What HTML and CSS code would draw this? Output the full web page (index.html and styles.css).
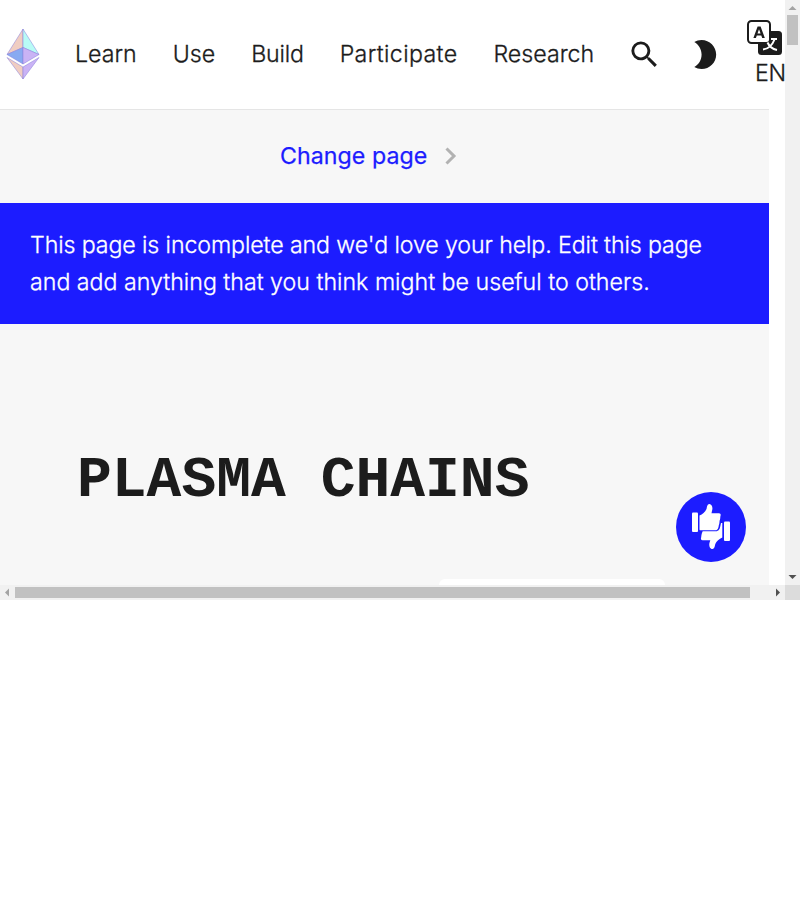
FILE: index.html
```
<!DOCTYPE html>
<html lang="en">
<head>
<meta charset="utf-8">
<title>Plasma chains</title>
<link rel="stylesheet" href="styles.css">
</head>
<body>
<div class="window">
  <div class="viewport">
    <div class="page">
      <header class="nav">
        <svg class="logo" width="34" height="52" viewBox="0 0 34 52">
          <g stroke="#8a80dc" stroke-opacity=".65" stroke-width=".8" stroke-linejoin="round">
            <path fill="#f0cdc2" d="M17 1 1 26.5l16-7z"/>
            <path fill="#b8fbf6" d="M17 1l16 25.500-16-7z"/>
            <path fill="#88aaf1" d="M1 26.500l16-7v16.500z"/>
            <path fill="#c9b3f5" d="M33 26.500l-16-7v16.500z"/>
            <path fill="#f0cdc2" d="M1 29.500l16 9.500v12z"/>
            <path fill="#cab3f5" d="M33 29.500l-16 9.500v12z"/>
          </g>
        </svg>
        <nav class="links"><a>Learn</a><a>Use</a><a class="tight">Build</a><a class="loose">Participate</a><a>Research</a></nav>
        <svg class="search" width="35" height="35" viewBox="0 0 24 24"><path fill="#1c1c1c" d="M15.500 14h-.79l-.28-.27A6.471 6.471 0 0 0 16 9.500 6.500 6.500 0 1 0 9.500 16c1.610 0 3.090-.59 4.230-1.570l.27.28v.79l5 4.990L20.490 19l-4.990-5zm-6 0C7.010 14 5 11.990 5 9.500S7.010 5 9.500 5 14 7.010 14 9.500 11.990 14 9.500 14z"/></svg>
        <svg class="moon" width="35" height="35" viewBox="0 0 24 24"><path fill="#1c1c1c" d="M10 2c-1.820 0-3.530.5-5 1.350C7.990 5.080 10 8.300 10 12s-2.010 6.920-5 8.650C6.470 21.500 8.180 22 10 22c5.520 0 10-4.480 10-10S15.520 2 10 2z"/></svg>
        <div class="lang">
          <svg width="36" height="36" viewBox="0 0 36 36">
            <rect x="11" y="11" width="24" height="24" rx="3.500" fill="#1c1c1c"/>
            <rect x="1" y="1" width="22" height="22" rx="3.500" fill="#fff" stroke="#1c1c1c" stroke-width="2"/>
            <path fill="#1c1c1c" fill-rule="evenodd" d="M10.600 6.500h3L17.800 18h-2.600l-.9-2.600H9.800L8.900 18H6.400zM12 9.200l-1.500 4.200h3.100z"/>
            <path fill="none" stroke="#fff" stroke-width="2" d="M24 19h6M16 29.500c5-.5 9-3.500 11.500-10M20.500 22.500c1.500 3.500 5 6.500 9.500 7.500"/>
          </svg>
          <span>EN</span>
        </div>
      </header>
      <div class="content">
        <div class="change">
          <span>Change page</span>
          <svg width="12" height="18" viewBox="0 0 12 18"><path fill="none" stroke="#b2b2b2" stroke-width="3" d="M1.500 1.500 9 9l-7.500 7.500"/></svg>
        </div>
        <div class="banner">This page is incomplete and we'd love your help. Edit this page and add anything that you think might be useful to others.</div>
        <main class="article">
          <h1>PLASMA CHAINS</h1>
          <div class="card"></div>
        </main>
      </div>
    </div>
    <div class="feedback">
      <svg width="70" height="70" viewBox="0 0 70 70" fill="#fff">
        <rect x="16" y="20.500" width="6" height="19.500" rx="1"/>
        <path d="M23.500 23.500c3-1 5.500-3.500 7-6.500.5-2 .5-4.500 2.500-5 2.500-.3 3.600 2.500 3.400 5-.1 1.500-.7 2.700-.9 4.200h7.500c1.700 0 2 1.500 1.400 3-.2 2-.2 3-.8 4.500-.2 2-.2 3-.8 4.500-.3 2.500-1 5-3 5H24.500c-.8 0-1-.5-1-1z"/>
        <rect x="48" y="29.500" width="6" height="19.500" rx="1"/>
        <path d="M46.300 31v14.500c-3 1.500-6 3.500-7 6.500-.6 2-.5 4.500-2.600 5-2.500.3-3.600-2.500-3.400-5 .1-1.500.8-2.700 1-3.700h-7.700c-1.700 0-2-1.500-1.400-3 .2-2 .5-4 1.500-6h13c3 0 4-2.300 4.500-4.500l.8-3.800z"/>
      </svg>
    </div>
  </div>
  <div class="vbar">
    <svg width="15" height="15"><path fill="#a3a3a3" d="M3.500 10 7.500 6l4 4z"/></svg>
    <div class="vthumb"></div>
    <svg width="15" height="15"><path fill="#505050" d="M3.500 5h8l-4 4z"/></svg>
  </div>
  <div class="hbar">
    <svg width="15" height="15"><path fill="#a3a3a3" d="M9 3.500v8l-4-4z"/></svg>
    <div class="hthumb"></div>
    <svg width="15" height="15"><path fill="#505050" d="M6 3.500v8l4-4z"/></svg>
  </div>
  <div class="corner"></div>
</div>
</body>
</html>
```
FILE: styles.css
```
* { box-sizing: border-box; }
body { margin: 0; background: #fff; color: #1c1c1c; font: 300 23.2px/37px Inter, "Liberation Sans", sans-serif; }
svg { display: block; flex: none; }
.window { display: grid; grid-template: 585px 15px / 785px 15px; width: 800px; height: 600px; }
.viewport { position: relative; overflow: hidden; }
.page { width: 769px; }
.nav { display: flex; align-items: center; height: 110px; border-bottom: 1px solid #e5e5e5; padding-left: 6px; }
.nav, .banner { -webkit-text-stroke-width: .3px; }
.logo { margin-top: -1px; }
.links { display: flex; gap: 36px; width: 521px; flex: none; margin-left: 35px; }
.tight { letter-spacing: -.2px; }
.loose { letter-spacing: .36px; }
.search { margin-left: 31px; }
.moon { margin-left: 25px; }
.lang { flex: none; width: 40px; margin-left: 25px; line-height: 36px; height: 70px; }
.lang span { display: block; margin-left: 8px; margin-top: -1px; letter-spacing: -.3px; }
.content { background: #f7f7f7; }
.change { display: flex; align-items: center; gap: 18px; height: 93px; padding-left: 280px; padding-bottom: 1px; color: #1c1cff; }
.change span { padding-top: 1px; font-weight: 400; letter-spacing: .05px; -webkit-text-stroke-width: .25px; }
.banner { height: 121px; padding: 24px 30px; background: #1c1cff; color: #fff; letter-spacing: 0; }
.banner::first-line { letter-spacing: -.11px; }
.article { height: 261px; padding: 116px 77px 0; overflow: hidden; }
h1 { margin: 0; font: bold 58px/81px "Liberation Mono", monospace; }
.card { width: 226px; height: 60px; margin: 58px 0 0 362px; border-radius: 6px; background: #fff; }
.feedback { position: absolute; left: 676px; top: 492px; border-radius: 50%; background: #1c1cff; }
.vbar { display: flex; flex-direction: column; background: #f1f1f1; }
.vthumb { width: 11px; height: 30px; margin: 0 2px auto; background: #c1c1c1; }
.hbar { display: flex; background: #f1f1f1; }
.hthumb { width: 735px; height: 11px; margin: 2px auto 2px 0; background: #c1c1c1; }
.corner { background: #dcdcdc; }
```
